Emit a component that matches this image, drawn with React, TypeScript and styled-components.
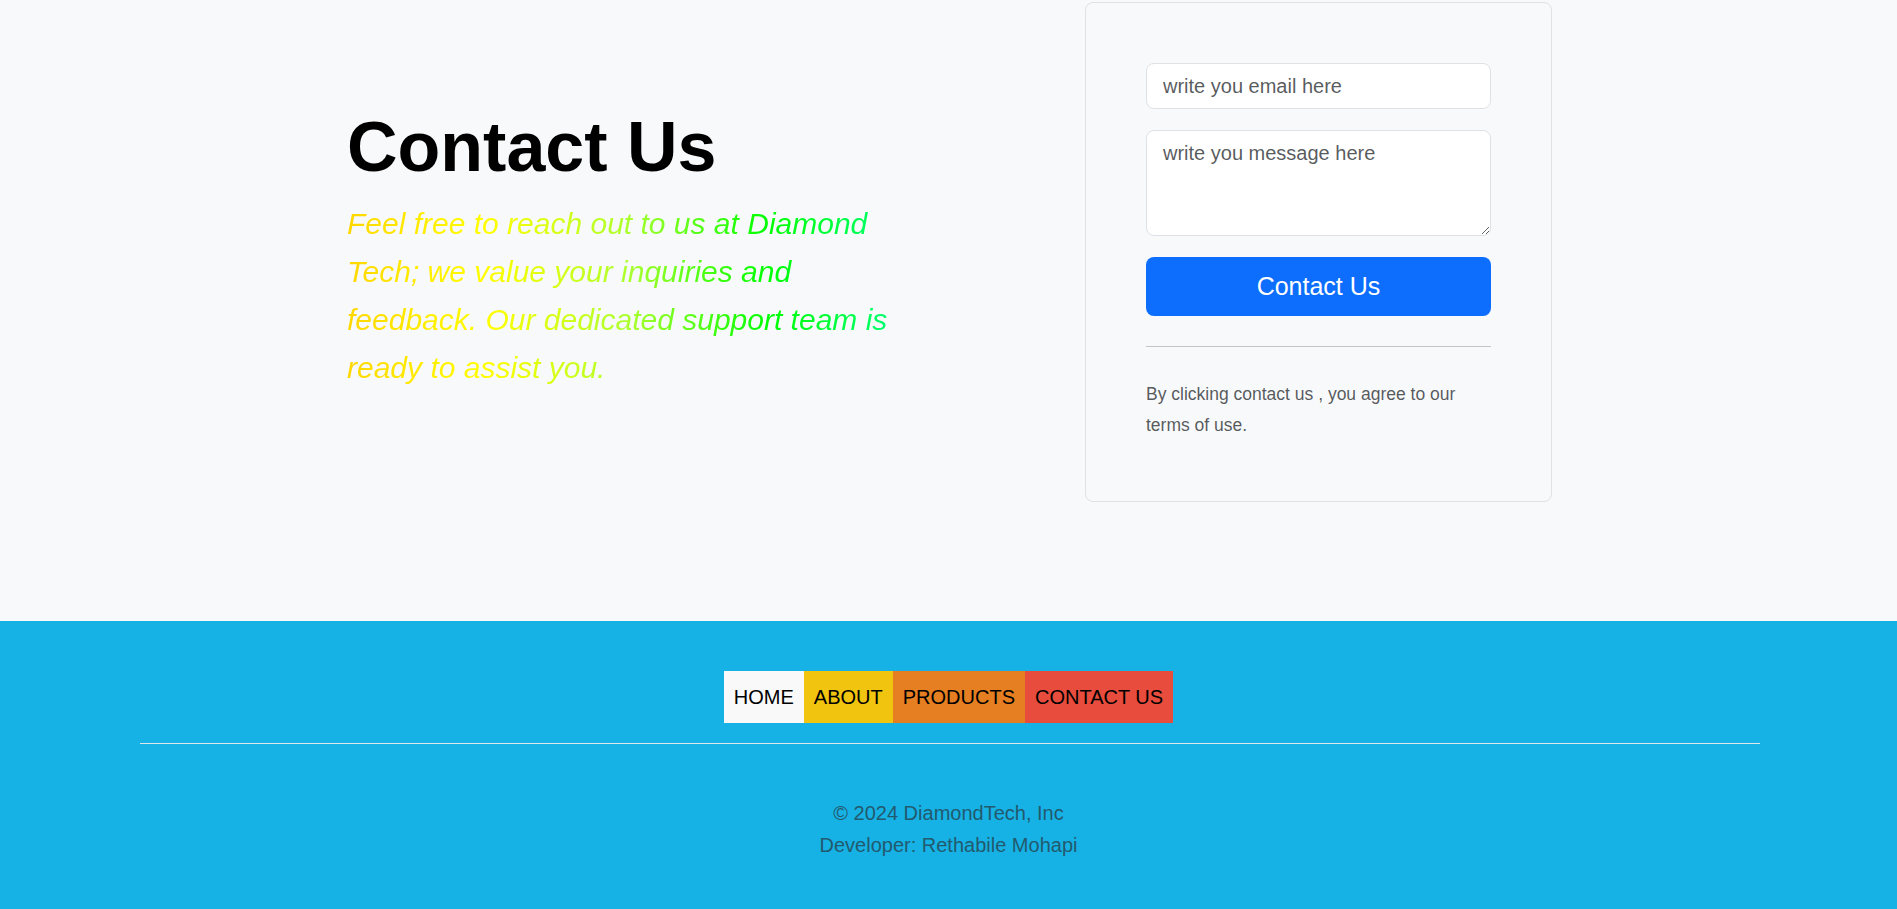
import React from "react";
import styled, { createGlobalStyle } from "styled-components";

const GlobalStyle = createGlobalStyle`
  html, body {
    margin: 0;
    padding: 0;
    overflow: hidden;
  }
  body {
    font-family: "Liberation Sans", Arial, sans-serif;
    color: #212529;
    background: #f8f9fa;
  }
  * { box-sizing: border-box; }
`;

const Page = styled.div`
  height: 909px;
  display: flex;
  flex-direction: column;
`;

const Hero = styled.section`
  height: 621px;
  flex-shrink: 0;
  background: #f8f9fa;
  padding: 2px 0 0 2px;
  display: flex;
  justify-content: center;
  align-items: flex-start;
`;

const Row = styled.div`
  display: flex;
  align-items: center;
  width: 1205px;
`;

const Intro = styled.div`
  width: 738px;
`;

const Title = styled.h1`
  margin: 0 0 18px;
  font-size: 70px;
  font-weight: 700;
  line-height: 1;
  color: #000;
`;

const Lead = styled.p`
  margin: 0;
  width: 560px;
  font-size: 30px;
  font-style: italic;
  line-height: 48px;
  background: linear-gradient(to right, #ffd700, #ffff00, #adff2f, #00ff00, #00ff7f);
  -webkit-background-clip: text;
  background-clip: text;
  color: transparent;
`;

const Card = styled.form`
  width: 467px;
  height: 500px;
  padding: 60px;
  border: 1px solid #dee2e6;
  border-radius: 8px;
  background: #f8f9fa;
  display: flex;
  flex-direction: column;
`;

const Field = styled.input`
  display: block;
  width: 100%;
  height: 46px;
  padding: 7px 16px;
  font-family: inherit;
  font-size: 20px;
  line-height: 30px;
  border: 1px solid #dee2e6;
  border-radius: 8px;
  background: #fff;
  color: #212529;
  margin-bottom: 21px;
  outline: none;
  &::placeholder { color: rgba(33, 37, 41, 0.75); }
`;

const Area = styled.textarea`
  display: block;
  width: 100%;
  height: 106px;
  padding: 7px 16px;
  font-family: inherit;
  font-size: 20px;
  line-height: 30px;
  border: 1px solid #dee2e6;
  border-radius: 8px;
  background: #fff;
  color: #212529;
  margin: 0 0 21px;
  resize: vertical;
  outline: none;
  &::placeholder { color: rgba(33, 37, 41, 0.75); }
`;

const Submit = styled.button`
  display: flex;
  align-items: center;
  justify-content: center;
  width: 100%;
  height: 59px;
  border: 0;
  border-radius: 8px;
  background: #0d6efd;
  color: #fff;
  font-family: inherit;
  font-size: 25px;
  cursor: pointer;
  flex-shrink: 0;
`;

const Rule = styled.hr`
  margin: 30px 0 0;
  border: 0;
  border-top: 1px solid #c3c5c8;
  width: 100%;
  flex-shrink: 0;
`;

const Terms = styled.small`
  display: block;
  margin-top: 32px;
  font-size: 17.5px;
  line-height: 31px;
  color: rgba(33, 37, 41, 0.75);
`;

const Footer = styled.footer`
  flex: 1;
  background: #16b2e6;
  padding-top: 50px;
`;

const Nav = styled.nav`
  display: flex;
  justify-content: center;
`;

const NavItem = styled.a<{ $bg: string }>`
  display: block;
  padding: 15px 10px;
  font-size: 20px;
  line-height: 22px;
  color: #000;
  text-decoration: none;
  background: ${(p) => p.$bg};
`;

const FooterRule = styled.div`
  margin: 20px 137px 0 140px;
  height: 1px;
  background: #dde6ea;
`;

const Credits = styled.div`
  margin-top: 53px;
  text-align: center;
  font-size: 20px;
  line-height: 32px;
  color: #225a6e;
`;

const links = [
  { label: "HOME", bg: "#f9f9f9" },
  { label: "ABOUT", bg: "#f1c40f" },
  { label: "PRODUCTS", bg: "#e67e22" },
  { label: "CONTACT US", bg: "#e74c3c" },
];

export default function App() {
  return (
    <>
      <GlobalStyle />
      <Page>
        <Hero>
          <Row>
            <Intro>
              <Title>Contact Us</Title>
              <Lead>
                Feel free to reach out to us at Diamond Tech; we value your inquiries and
                feedback. Our dedicated support team is ready to assist you.
              </Lead>
            </Intro>
            <Card onSubmit={(e) => e.preventDefault()}>
              <Field type="email" placeholder="write you email here" />
              <Area placeholder="write you message here" />
              <Submit type="submit">Contact Us</Submit>
              <Rule />
              <Terms>By clicking contact us , you agree to our terms of use.</Terms>
            </Card>
          </Row>
        </Hero>
        <Footer>
          <Nav>
            {links.map((l) => (
              <NavItem key={l.label} href="#" $bg={l.bg}>
                {l.label}
              </NavItem>
            ))}
          </Nav>
          <FooterRule />
          <Credits>
            <div>© 2024 DiamondTech, Inc</div>
            <div>Developer: Rethabile Mohapi</div>
          </Credits>
        </Footer>
      </Page>
    </>
  );
}
